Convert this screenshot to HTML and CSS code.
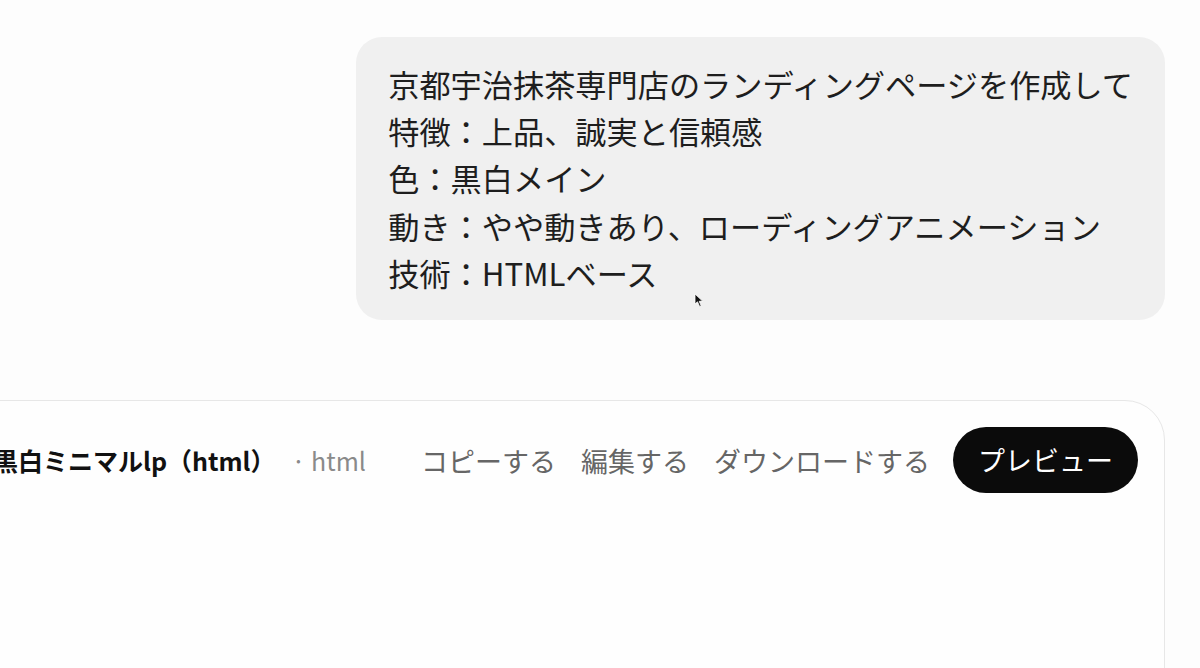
FILE: index.html
```html
<!DOCTYPE html>
<html lang="ja">
<head>
<meta charset="utf-8">
<title>チャット</title>
<link rel="stylesheet" href="styles.css">
</head>
<body>
<main class="thread">
  <div class="msg-row">
    <div class="bubble">
      <p class="line">京都宇治抹茶専門店のランディングページを作成して</p>
      <p class="line">特徴：上品、誠実と信頼感</p>
      <p class="line">色：黒白メイン</p>
      <p class="line">動き：やや動きあり、ローディングアニメーション</p>
      <p class="line">技術：HTMLベース</p>
      <svg class="cursor" width="10" height="15" viewBox="0 0 10 15"><path d="M1 1 L1 11 L3.5 8.8 L5.6 13.5 L7.2 12.8 L5.2 8.3 L8.6 8.1 Z" fill="#111" stroke="#fff" stroke-width="0.8"/></svg>
    </div>
  </div>
  <section class="card">
    <header class="card-head">
      <div class="title-group">
        <span class="title">黒白ミニマルlp（html）</span>
        <span class="ext">· html</span>
      </div>
      <nav class="actions">
        <span class="action">コピーする</span>
        <span class="action">編集する</span>
        <span class="action">ダウンロードする</span>
        <span class="preview">プレビュー</span>
      </nav>
    </header>
  </section>
</main>
</body>
</html>
```
FILE: styles.css
```css
html, body {
  margin: 0;
  padding: 0;
  height: 100%;
  overflow: hidden;
  background: #fdfdfd;
}
body {
  font-family: "Noto Sans CJK JP", "Noto Sans", sans-serif;
  color: #1c1c1c;
}
.thread {
  padding-top: 37px;
  padding-right: 35px;
}
.msg-row {
  display: flex;
  justify-content: flex-end;
}
.bubble {
  position: relative;
  background: #f0f0f0;
  border-radius: 26px;
  padding: 23px 32px 24px 32px;
}
.line {
  margin: 0;
  font-size: 31.2px;
  line-height: 47.2px;
  white-space: nowrap;
  color: #1e1e1e;
}
.cursor {
  position: absolute;
  left: 338px;
  top: 256px;
}
.card {
  margin-top: 80px;
  margin-left: -60px;
  height: 400px;
  border: 1.5px solid #e7e7e7;
  border-radius: 40px;
  background: #fefefe;
  padding: 26px 26px 0 52px;
}
.card-head {
  display: flex;
  align-items: center;
  justify-content: space-between;
}
.title-group {
  display: flex;
  align-items: baseline;
  gap: 16px;
  white-space: nowrap;
}
.title {
  font-size: 25px;
  font-weight: 700;
  color: #111;
}
.ext {
  font-size: 25px;
  color: #8a8a8a;
}
.actions {
  display: flex;
  align-items: center;
  gap: 25px;
  white-space: nowrap;
}
.action {
  font-size: 27px;
  color: #666;
}
.preview {
  margin-left: -2px;
  background: #0b0b0b;
  color: #fff;
  font-size: 27px;
  line-height: 40px;
  padding: 13px 25px;
  border-radius: 40px;
}
```
